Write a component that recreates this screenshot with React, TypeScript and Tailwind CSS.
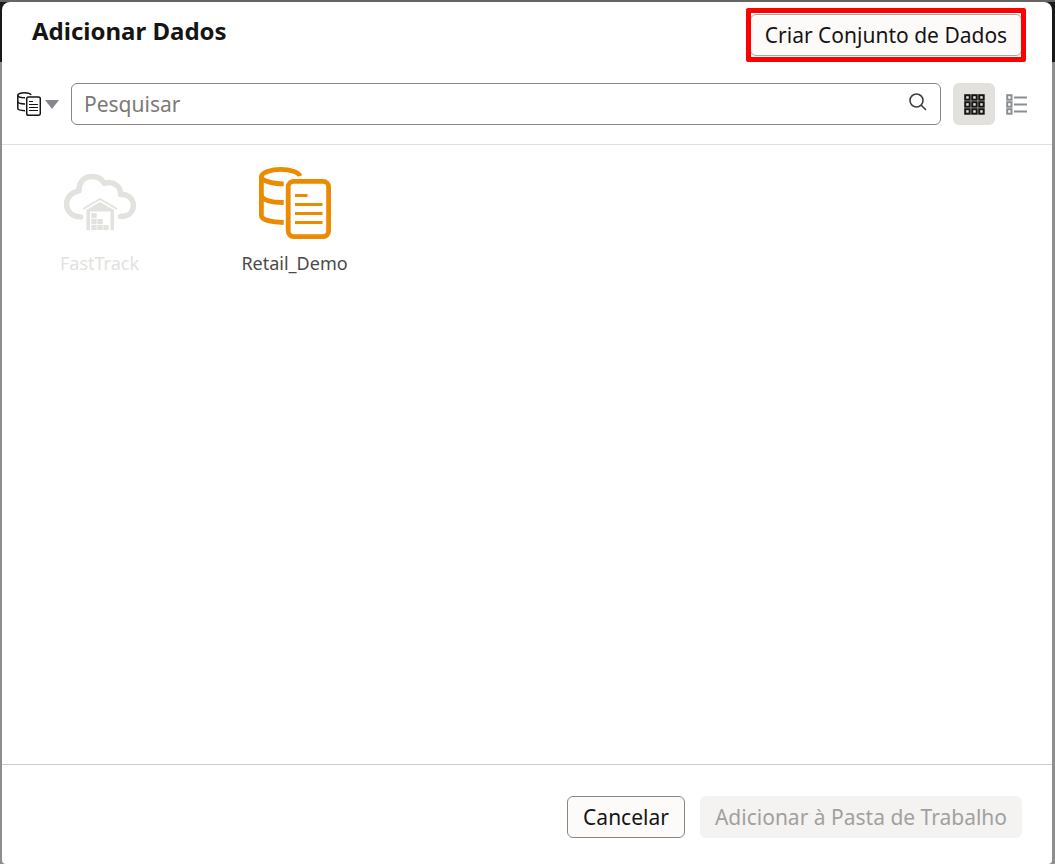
import { useState } from "react";

function DatasetIcon() {
  return (
    <svg viewBox="0 0 24 24" className="size-[24px]" fill="none" stroke="currentColor" strokeWidth="1.500" aria-hidden="true">
      <path d="M.8 3.200v13.300c0 1.200 3.200 2 7.200 2.200" />
      <path d="M14 3C13.500 1.700 10.500.8 7.200.8S.8 1.800.8 3.200s3.200 2.500 7.200 2.500" />
      <path d="M.8 9.500c0 1.400 3.200 2.400 7.200 2.400" />
      <rect x="9.700" y="4.900" width="13.600" height="18.300" rx="1.800" />
      <path d="M12 9.500h4M12 12.500h9M12 15.500h9M12 18.500h9" strokeWidth="1" />
    </svg>
  );
}

function RetailIcon() {
  return (
    <svg viewBox="0 0 72 72" className="size-[72px] text-[#ed8b00]" fill="none" stroke="currentColor" aria-hidden="true">
      <g strokeWidth="4.800">
        <path d="M2.400 9v39.500c0 4 8.800 6.600 22.300 7" />
        <path d="M41 9C39.500 5 31 2.400 21.700 2.400S2.400 5.500 2.400 9.500s9.800 7.300 22.300 7.300" />
        <path d="M2.400 28c0 4.500 8.800 7.500 22.300 7.500" />
        <rect x="29.200" y="14.400" width="40.400" height="55.200" rx="5.500" />
      </g>
      <path d="M36 28.500H48.500M36 37.500H63.500M36 46.500H63.500M36 55.500H63.500" strokeWidth="3" />
    </svg>
  );
}

function WarehouseIcon() {
  return (
    <svg viewBox="0 0 72 72" className="size-[72px] text-[#e2e2de]" fill="none" aria-hidden="true">
      <path
        d="M16.500 50C8 49.500 2.500 44 2.500 37c0-7 5.500-12 12.500-13C14.500 15.500 20 9.500 28 9.500c6 0 10 2.500 12.500 7C49 13.500 57 19 56.500 27.500 64 27 69.500 31.500 69.500 38.500S64 49.500 56.500 49.500"
        stroke="currentColor"
        strokeWidth="5.500"
        strokeLinecap="round"
        strokeLinejoin="round"
      />
      <path d="M19 42 36 32 53 42" stroke="currentColor" strokeWidth="1.800" />
      <path d="M22.500 43 36 35 50 43V63h-3.500V44.500H26V63h-3.500z" fill="currentColor" />
      <path d="M27.300 46h5.300v5.300h-5.300zM27.300 52h5.300v5.300h-5.300zM33.300 52h5.300v5.300h-5.300zM27.300 58h5.300v5h-5.300zM33.300 58h5.300v5h-5.300zM39.300 58h5.300v5h-5.300z" fill="currentColor" />
    </svg>
  );
}

const starts = [0, 7, 14];

function GridIcon() {
  return (
    <svg viewBox="0 0 21 21" className="size-[21px]" fill="none" stroke="currentColor" strokeWidth="2" aria-hidden="true">
      {starts.map((y) => starts.map((x) => <rect key={`${x}-${y}`} x={x + 1.2} y={y + 1.2} width="4.500" height="4.500" />))}
    </svg>
  );
}

function ListIcon() {
  return (
    <svg viewBox="0 0 21 21" className="size-[21px]" fill="none" stroke="currentColor" strokeWidth="2" aria-hidden="true">
      {starts.map((y) => (
        <g key={y}>
          <rect x="1.200" y={y + 1.2} width="4.300" height="4.500" />
          <path d={`M8 ${y + 3.5}H21`} />
        </g>
      ))}
    </svg>
  );
}

export default function App() {
  const [query, setQuery] = useState("");
  const [view, setView] = useState("grid");

  return (
    <div className="relative flex min-h-screen flex-col bg-[#8e8e8e] pt-[2px] pr-[3px] pl-[2px] font-['Noto_Sans',sans-serif] text-[#161513]">
      <div className="absolute inset-x-0 top-0 h-[62px] border-t-2 border-[#666463] bg-[#1b1918]" />

      <div role="dialog" aria-labelledby="dialog-title" className="relative flex grow flex-col rounded-t-lg rounded-b-sm bg-white">
        <header className="flex items-start justify-between pt-3 pr-[30px] pl-[30px]">
          <h1 id="dialog-title" className="text-2xl leading-[34px] font-bold">
            Adicionar Dados
          </h1>
          <div className="relative">
            <button type="button" className="h-[42px] w-[272px] rounded-md border border-[#aaa6a2] bg-[#fcfbfa] pt-0.5 text-[21px] whitespace-nowrap">
              Criar Conjunto de Dados
            </button>
            <div className="pointer-events-none absolute -inset-x-1 -inset-y-1.5 rounded-xs border-5 border-[#ff0000]" />
          </div>
        </header>

        <div className="mt-[27px] flex items-center border-b border-[#e1e0dc] pr-[15px] pb-[19px] pl-[15px]">
          <button type="button" aria-label="Tipo de dados" className="mr-3 flex items-center gap-1">
            <DatasetIcon />
            <svg viewBox="0 0 14 9" className="h-[9px] w-[14px] text-[#85888c]" aria-hidden="true">
              <path d="M0 0h14L7 9z" fill="currentColor" />
            </svg>
          </button>
          <div className="flex h-[42px] grow items-center rounded-md border border-[#8b8580] pr-[13px] pl-3">
            <input
              type="text"
              aria-label="Pesquisar"
              placeholder="Pesquisar"
              value={query}
              onChange={(e) => setQuery(e.target.value)}
              className="min-w-0 grow bg-transparent pt-0.5 text-[21px] outline-none placeholder:text-[#7b7977]"
            />
            <svg viewBox="0 0 18 18" className="mb-1 size-[18px] text-[#403e3b]" fill="none" stroke="currentColor" strokeWidth="1.600" aria-hidden="true">
              <circle cx="7.500" cy="7.500" r="6.500" />
              <path d="M12 12l5 5" />
            </svg>
          </div>
          <div className="ml-3 flex">
            <button
              type="button"
              aria-label="Grade"
              aria-pressed={view === "grid"}
              onClick={() => setView("grid")}
              className="flex size-[42px] items-center justify-center rounded-md bg-[#e2e1dd]"
            >
              <GridIcon />
            </button>
            <button
              type="button"
              aria-label="Lista"
              aria-pressed={view === "list"}
              onClick={() => setView("list")}
              className="flex size-[42px] items-center justify-center rounded-md text-[#8b8d90]"
            >
              <ListIcon />
            </button>
          </div>
        </div>

        <main className="flex grow flex-wrap content-start pt-[22px]">
          <button type="button" disabled className="flex w-[195px] flex-col items-center gap-3 text-[#e2e2de]">
            <WarehouseIcon />
            <span className="text-lg leading-6">FastTrack</span>
          </button>
          <button type="button" className="flex w-[195px] flex-col items-center gap-3 text-[#4b4a48]">
            <RetailIcon />
            <span className="text-lg leading-6">Retail_Demo</span>
          </button>
        </main>

        <footer className="flex justify-end gap-[15px] border-t border-[#d0cdc5] pt-[31px] pr-[30px] pb-[26px]">
          <button type="button" className="h-[42px] w-[118px] rounded-md border border-[#8b8580] bg-[#fcfbfa] pt-0.5 text-[21px]">
            Cancelar
          </button>
          <button type="button" disabled className="h-[42px] w-[322px] rounded-md bg-[#f4f3f2] pt-0.5 text-[21px] whitespace-nowrap text-[#a2a09e]">
            Adicionar à Pasta de Trabalho
          </button>
        </footer>
      </div>
    </div>
  );
}
